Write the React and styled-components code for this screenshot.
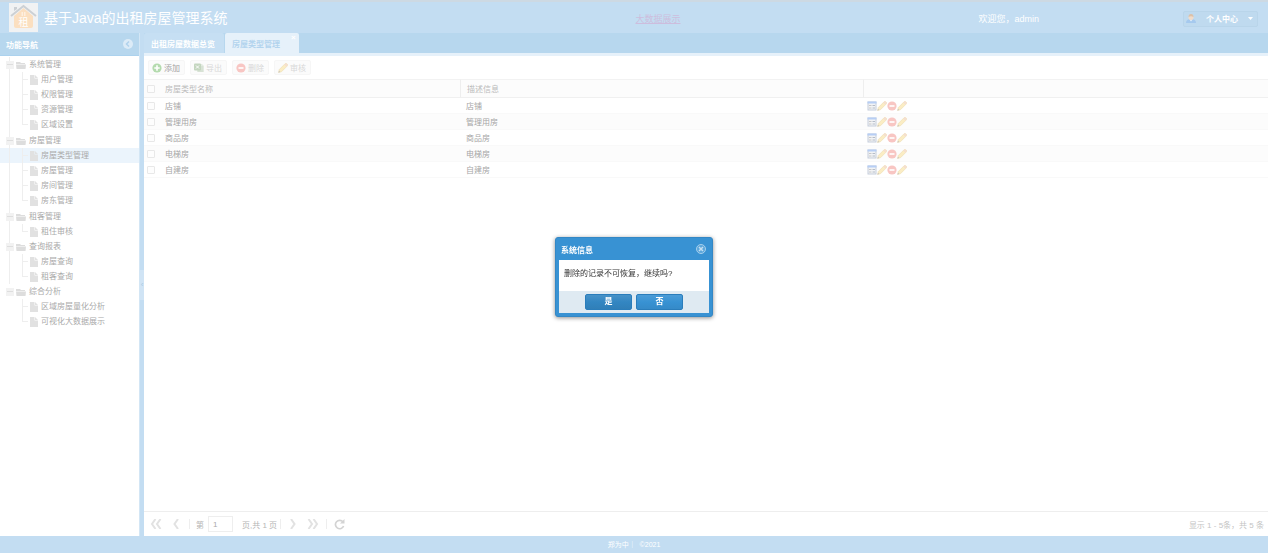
import React, { useState } from 'react'
import styled, { createGlobalStyle } from 'styled-components'

const GlobalStyle = createGlobalStyle`
  * {
    box-sizing: border-box;
  }
  html, body, #root {
    height: 100%;
    margin: 0;
  }
  body, button, input {
    font-family: "Liberation Sans", "Noto Sans CJK SC", sans-serif;
    font-size: 8px;
  }
  button {
    border: 0;
    padding: 0;
    margin: 0;
    background: none;
  }
  svg {
    display: block;
    flex: none;
  }
`

const Page = styled.div`
  display: flex;
  flex-direction: column;
  height: 100vh;
  background: #c3ddf2;
  overflow: hidden;
`

const Header = styled.header`
  display: grid;
  grid-template-columns: 1fr 94px 1fr;
  align-items: center;
  height: 33px;
  flex: none;
  padding: 0 10px 0 9px;
  border-top: 2px solid #cdd9e3;
`

const Brand = styled.div`
  display: flex;
  align-items: center;
  gap: 6px;
`

const Title = styled.h1`
  margin: 0;
  font-size: 14px;
  line-height: 20px;
  font-weight: 400;
  color: #fff;
`

const ScreenLink = styled.a`
  padding-top: 1px;
  font-size: 9px;
  text-align: right;
  color: #cdbddd;
`

const Account = styled.div`
  display: flex;
  align-items: center;
  justify-content: space-between;
  padding: 2px 0 0 298px;
`

const Welcome = styled.span`
  font-size: 9px;
  color: #fff;
  white-space: nowrap;
`

const AccountButton = styled.button`
  display: flex;
  align-items: center;
  justify-content: space-between;
  width: 75px;
  height: 16px;
  padding: 0 4px 0 2px;
  border: 1px solid #b9d5ea;
  border-radius: 2px;
  background: #bfdaef;
  color: #fff;
  font-weight: 700;
`

const Body = styled.div`
  display: flex;
  flex: 1;
  min-height: 0;
`

const Sidebar = styled.nav`
  display: flex;
  flex-direction: column;
  width: 139px;
  flex: none;
  background: #fff;
`

const SidebarHeader = styled.div`
  display: flex;
  align-items: center;
  justify-content: space-between;
  height: 23px;
  padding: 0 6px;
  border-bottom: 1px solid #acd2ee;
  background: #b7d7ee;
  color: #fff;
  font-weight: 700;
`

const Tree = styled.ul`
  margin: 0;
  padding: 1px 0 0;
  list-style: none;
`

const Group = styled.li`
  background: linear-gradient(#eee, #eee) 9px 0 / 1px 100% no-repeat;

  &:nth-child(-n + 2) {
    padding-bottom: 1px;
  }
  &:last-child {
    background: none;
  }
`

const GroupRow = styled.div`
  display: flex;
  align-items: center;
  height: 15px;
  padding-left: 6px;
  color: #aaa;
`

const Toggle = styled.button`
  width: 8px;
  height: 8px;
  margin-right: 2px;
  background: #f2f2f2;

  &::before {
    content: '';
    display: block;
    height: 1px;
    margin: 0 1px;
    background: #dedede;
  }
`

const Label = styled.span`
  margin-left: 3px;
  line-height: 15px;
`

const Leaves = styled.ul`
  margin: 0;
  padding: 0;
  list-style: none;
`

const Leaf = styled.li`
  display: flex;
  align-items: center;
  height: 15px;
  padding-left: 30px;
  color: #aaa;
  background:
    linear-gradient(#eee, #eee) 9px 0 / ${props => (props.$inLastGroup ? 0 : 1)}px 100% no-repeat,
    linear-gradient(#eee, #eee) 22px 0 / 1px ${props => (props.$last ? 50 : 100)}% no-repeat,
    linear-gradient(#eee, #eee) 22px 7px / 6px 1px no-repeat,
    ${props => (props.$active ? '#ebf4fc' : 'transparent')};
`

const Splitter = styled.div`
  display: flex;
  align-items: center;
  width: 5px;
  flex: none;
  border-left: 1px solid #d3e6f5;
`

const SplitterHandle = styled.button`
  width: 4px;
  height: 30px;
  background: #d0e4f5;
  color: #a9c9e2;
`

const Main = styled.main`
  display: flex;
  flex-direction: column;
  flex: 1;
  min-width: 0;
  background: #fff;
`

const TabBar = styled.div`
  display: flex;
  gap: 1px;
  height: 23px;
  flex: none;
  background: #b7d7ee;
  border-bottom: 3px solid #e6f1fa;
`

const Tab = styled.button`
  display: flex;
  align-items: center;
  height: 20px;
  padding: 0 9px 0 7px;
  border-radius: 2px 2px 0 0;
  font-weight: 700;
  color: ${props => (props.$active ? '#b3d4ee' : '#fff')};
  background: ${props => (props.$active ? '#e6f1fa' : '#c6dff3')};
`

const TabClose = styled.span`
  align-self: flex-start;
  margin: 1px -6px 0 11px;
  line-height: 8px;
  color: #fff;
`

const Toolbar = styled.div`
  display: flex;
  align-items: center;
  gap: 5px;
  height: 23px;
  flex: none;
  padding-left: 4px;
`

const ToolButton = styled.button`
  display: flex;
  align-items: center;
  gap: 2px;
  height: 15px;
  padding: 0 4px 0 3px;
  border: 1px solid #f6f6f6;
  border-radius: 2px;
  background: #fbfbfb;
  color: ${props => (props.disabled ? '#d8d8d8' : '#a3a3a3')};
`

const Table = styled.table`
  width: 100%;
  table-layout: fixed;
  border-collapse: separate;
  border-spacing: 0;

  th, td {
    padding: 0 0 0 6px;
    text-align: left;
    font-weight: 400;
    overflow: hidden;
    white-space: nowrap;
  }
  th {
    height: 19px;
    color: #bbb;
    background: #fcfcfc;
    border-top: 1px solid #f2f2f2;
    border-bottom: 1px solid #f0f0f0;
  }
  th:nth-child(n + 3) {
    border-left: 1px solid #eee;
  }
  td {
    height: 16px;
    color: #a6a6a6;
    border-bottom: 1px solid #f9f9f9;
  }
  tr > :first-child {
    padding-left: 3px;
  }
  tr > :nth-child(2), td:last-child {
    padding-left: 4px;
  }
  tbody tr:nth-child(even) {
    background: #fcfcfc;
  }
`

const Checkbox = styled.input.attrs({ type: 'checkbox' })`
  appearance: none;
  display: block;
  width: 8px;
  height: 8px;
  margin: 0;
  border: 1px solid #e8e8e8;
  border-radius: 1px;
  background: #fdfdfd;
`

const Actions = styled.div`
  display: flex;
  align-items: center;
`

const Pager = styled.div`
  display: flex;
  align-items: center;
  height: 25px;
  flex: none;
  margin-top: auto;
  padding: 0 4px 0 2px;
  border-top: 1px solid #eee;
  color: #b5b5b5;
`

const PagerButton = styled.button`
  display: flex;
  justify-content: center;
  width: 20px;
  color: #e2e2e2;
`

const Separator = styled.span`
  width: 1px;
  height: 10px;
  margin: 0 2px 0 3px;
  background: #eee;
`

const PageField = styled.label`
  display: flex;
  align-items: center;
  gap: 4px;
  padding-left: 4px;
`

const PageInput = styled.input`
  width: 25px;
  height: 16px;
  padding: 0 4px;
  border: 1px solid #eee;
  background: #fff;
  color: #aaa;
`

const PageTotal = styled.span`
  padding-left: 9px;
`

const Summary = styled.span`
  margin-left: auto;
  color: #c4c4c4;
`

const Footer = styled.footer`
  height: 17px;
  flex: none;
  font-size: 7px;
  line-height: 17px;
  text-align: center;
  color: #fff;
  white-space: pre;
`

const Mask = styled.div`
  position: fixed;
  inset: 0;
  display: flex;
  align-items: center;
  justify-content: center;
`

const Dialog = styled.section`
  width: 158px;
  margin-top: 1px;
  padding: 0 3px 3px;
  border: 1px solid #3387c5;
  border-radius: 3px;
  background: #3892d3;
  box-shadow: 0 1px 4px rgba(0, 0, 0, 0.45);
`

const DialogHeader = styled.div`
  display: flex;
  align-items: center;
  justify-content: space-between;
  height: 22px;
  padding: 0 3px 0 2px;
  color: #fff;
`

const DialogTitle = styled.h2`
  margin: 0;
  font-size: 8px;
`

const Message = styled.p`
  margin: 0;
  padding: 8px 5px 11px;
  line-height: 12px;
  color: #333;
  background: #fff;
`

const DialogFooter = styled.div`
  display: flex;
  justify-content: center;
  gap: 4px;
  padding: 3px 0;
  background: #dfeaf2;
`

const DialogButton = styled.button`
  width: 47px;
  height: 16px;
  border: 1px solid #2a7dbb;
  border-radius: 2px;
  color: #fff;
  font-weight: 700;
  line-height: 12px;
  background: ${props =>
    props.$focused
      ? 'linear-gradient(#4792c8, #3386c2 50%, #307fb8)'
      : 'linear-gradient(#4b9cd7, #3892d3 50%, #358ac8)'};
`

const groups = [
  { name: '系统管理', items: ['用户管理', '权限管理', '资源管理', '区域设置'] },
  { name: '房屋管理', items: ['房屋类型管理', '房屋管理', '房间管理', '房东管理'] },
  { name: '租客管理', items: ['租住审核'] },
  { name: '查询报表', items: ['房屋查询', '租客查询'] },
  { name: '综合分析', items: ['区域房屋量化分析', '可视化大数据展示'] }
]

const houseTypes = ['店铺', '管理用房', '商品房', '电梯房', '自建房']

const LogoIcon = () => (
  <svg width='29' height='29' viewBox='0 0 29 29'>
    <rect width='29' height='29' fill='#f1f2f3' />
    <path d='M5 13 14.500 5 24 13V23Q24 25 22 25H7Q5 25 5 23Z' fill='#fbdfc0' />
    <path d='M2 13 14.500 3 27 13' fill='none' stroke='#ccd0d4' strokeWidth='2' />
    <path d='M5 8V4H8V6' fill='#ccd0d4' />
    <path d='M12 9h5v4h-5zM14.500 9v4M12 11h5' fill='#fff' stroke='#fbdfc0' strokeWidth='1' />
    <text x='14.500' y='23' fontSize='10' textAnchor='middle' fill='#fff'>租</text>
  </svg>
)

const UserIcon = () => (
  <svg width='10' height='10' viewBox='0 0 10 10'>
    <path d='M0 9Q0 5 5 5Q10 5 10 9Z' fill='#a5c9ee' />
    <path d='M3.500 5.500 5 7.500 6.500 5.500Z' fill='#e8f1fa' />
    <circle cx='5' cy='3.500' r='2.500' fill='#f0dccb' />
    <path d='M2.500 3Q2.500 0 5 0Q7.500 0 7.500 3Q5 1.500 2.500 3Z' fill='#dcc1a8' />
  </svg>
)

const CaretIcon = () => (
  <svg width='5' height='3' viewBox='0 0 5 3'>
    <path d='M0 0H5L2.500 3Z' fill='#fff' />
  </svg>
)

const CollapseIcon = () => (
  <svg width='10' height='10' viewBox='0 0 10 10'>
    <circle cx='5' cy='5' r='5' fill='#dcebf7' />
    <path d='M6 2.500 3.500 5 6 7.500' fill='none' stroke='#b0d2ec' strokeWidth='1.500' />
  </svg>
)

const FolderIcon = () => (
  <svg width='10' height='8' viewBox='0 0 10 8'>
    <path d='M0 1H4L5 2H9V3H0Z' fill='#ddd' />
    <path d='M0 3.500H10L9.500 8H.5Z' fill='#ddd' />
  </svg>
)

const FileIcon = () => (
  <svg width='8' height='10' viewBox='0 0 8 10'>
    <path d='M0 0H4.500V3.500H8V10H0Z' fill='#e1e1e1' />
    <path d='M5 0 8 3H5Z' fill='#e1e1e1' />
  </svg>
)

const AddIcon = () => (
  <svg width='10' height='10' viewBox='0 0 10 10'>
    <circle cx='5' cy='5' r='4.600' fill='#b4dbae' />
    <path d='M5 2.300V7.700M2.300 5H7.700' stroke='#fff' strokeWidth='1.600' />
  </svg>
)

const ExportIcon = () => (
  <svg width='10' height='10' viewBox='0 0 10 10'>
    <path d='M3 1H8L10 3V9H3Z' fill='#e3ebe1' />
    <path d='M6 4H9M6 6H9M4 8H9' stroke='#cddaca' />
    <rect y='.5' width='7' height='7' rx='1' fill='#c4d6bf' />
    <path d='M2 2.500 5 5.500M5 2.500 2 5.500' stroke='#fff' />
  </svg>
)

const DeleteIcon = () => (
  <svg width='10' height='10' viewBox='0 0 10 10'>
    <circle cx='5' cy='5' r='4.600' fill='#f8c6c3' />
    <path d='M2.500 5H7.500' stroke='#fff' strokeWidth='1.600' />
  </svg>
)

const PencilIcon = () => (
  <svg width='10' height='10' viewBox='0 0 10 10'>
    <path d='M.5 9.500 1.300 6.500 7 .8Q8.200 0 9.200 1Q10 2 9.200 3L3.500 8.700Z' fill='#fbedc4' stroke='#eddcb4' strokeWidth='.6' />
    <path d='M7 .8Q8.200 0 9.200 1Q10 2 9.200 3L8.300 3.800 6.200 1.600Z' fill='#f5dfd0' />
    <path d='M.5 9.500 1 7.700 2.300 9Z' fill='#c4c4c4' />
  </svg>
)

const FormIcon = () => (
  <svg width='10' height='10' viewBox='0 0 10 10'>
    <rect x='1' y='1' width='8' height='8' fill='#f2f3f5' stroke='#c6cedb' />
    <path d='M.5 1.500H9.500' stroke='#b7cef5' strokeWidth='2' />
    <path d='M2 4.500H4.500M2 7H4.500' stroke='#c8c8c8' />
    <path d='M5.500 4.500H8M5.500 7H8' stroke='#b5bdc9' />
  </svg>
)

const Chevrons = ({ double, right }) => (
  <svg width='12' height='10' viewBox='0 0 12 10' fill='none' stroke='currentColor' strokeWidth='2'>
    <g transform={right ? 'matrix(-1 0 0 1 12 0)' : undefined}>
      <path d={double ? 'M5.500 0 2 5 5.500 10M10.500 0 7 5 10.500 10' : 'M8 0 4.500 5 8 10'} />
    </g>
  </svg>
)

const RefreshIcon = () => (
  <svg width='11' height='11' viewBox='0 0 11 11'>
    <path d='M9 3A4.200 4.200 0 1 0 9.600 7' fill='none' stroke='#d3d3d3' strokeWidth='1.700' />
    <path d='M10.500 0V4.500H6Z' fill='#d3d3d3' />
  </svg>
)

const CloseIcon = () => (
  <svg width='10' height='10' viewBox='0 0 10 10'>
    <circle cx='5' cy='5' r='4.500' fill='#5ba6db' stroke='#a6cfec' />
    <path d='M3 3 7 7M7 3 3 7' stroke='#c3dff2' strokeWidth='1.500' />
  </svg>
)

const NavTree = () => (
  <Tree>
    {groups.map((group, g) => (
      <Group key={group.name}>
        <GroupRow>
          <Toggle aria-label='收起' />
          <FolderIcon />
          <Label>{group.name}</Label>
        </GroupRow>
        <Leaves>
          {group.items.map((item, i) => (
            <Leaf
              key={item}
              $active={item === '房屋类型管理'}
              $last={i === group.items.length - 1}
              $inLastGroup={g === groups.length - 1}
            >
              <FileIcon />
              <Label>{item}</Label>
            </Leaf>
          ))}
        </Leaves>
      </Group>
    ))}
  </Tree>
)

const HouseTypeTable = () => (
  <Table>
    <colgroup>
      <col width='17' />
      <col width='299' />
      <col width='403' />
      <col />
    </colgroup>
    <thead>
      <tr>
        <th><Checkbox aria-label='全选' /></th>
        <th>房屋类型名称</th>
        <th>描述信息</th>
        <th aria-label='操作' />
      </tr>
    </thead>
    <tbody>
      {houseTypes.map(name => (
        <tr key={name}>
          <td><Checkbox aria-label={name} /></td>
          <td>{name}</td>
          <td>{name}</td>
          <td>
            <Actions>
              <button aria-label='查看'><FormIcon /></button>
              <button aria-label='编辑'><PencilIcon /></button>
              <button aria-label='删除'><DeleteIcon /></button>
              <button aria-label='审核'><PencilIcon /></button>
            </Actions>
          </td>
        </tr>
      ))}
    </tbody>
  </Table>
)

const ConfirmDialog = ({ onClose }) => (
  <Mask>
    <Dialog role='dialog' aria-labelledby='confirm-title'>
      <DialogHeader>
        <DialogTitle id='confirm-title'>系统信息</DialogTitle>
        <button aria-label='关闭' onClick={onClose}><CloseIcon /></button>
      </DialogHeader>
      <Message>删除的记录不可恢复，继续吗?</Message>
      <DialogFooter>
        <DialogButton $focused onClick={onClose}>是</DialogButton>
        <DialogButton onClick={onClose}>否</DialogButton>
      </DialogFooter>
    </Dialog>
  </Mask>
)

const App = () => {
  const [isConfirming, setIsConfirming] = useState(true)
  const [page, setPage] = useState('1')

  return (
    <Page lang='zh-CN'>
      <GlobalStyle />
      <Header>
        <Brand>
          <LogoIcon />
          <Title>基于Java的出租房屋管理系统</Title>
        </Brand>
        <ScreenLink href='#screen'>大数据展示</ScreenLink>
        <Account>
          <Welcome>欢迎您，admin</Welcome>
          <AccountButton>
            <UserIcon />
            个人中心
            <CaretIcon />
          </AccountButton>
        </Account>
      </Header>
      <Body>
        <Sidebar>
          <SidebarHeader>
            功能导航
            <button aria-label='收起导航'><CollapseIcon /></button>
          </SidebarHeader>
          <NavTree />
        </Sidebar>
        <Splitter>
          <SplitterHandle aria-label='收起'>‹</SplitterHandle>
        </Splitter>
        <Main>
          <TabBar>
            <Tab>出租房屋数据总览</Tab>
            <Tab $active>
              房屋类型管理
              <TabClose>×</TabClose>
            </Tab>
          </TabBar>
          <Toolbar>
            <ToolButton><AddIcon />添加</ToolButton>
            <ToolButton disabled><ExportIcon />导出</ToolButton>
            <ToolButton disabled><DeleteIcon />删除</ToolButton>
            <ToolButton disabled><PencilIcon />审核</ToolButton>
          </Toolbar>
          <HouseTypeTable />
          <Pager>
            <PagerButton aria-label='首页'><Chevrons double /></PagerButton>
            <PagerButton aria-label='上一页'><Chevrons /></PagerButton>
            <Separator />
            <PageField>
              第
              <PageInput value={page} onChange={e => setPage(e.target.value)} />
            </PageField>
            <PageTotal>页,共 1 页</PageTotal>
            <Separator />
            <PagerButton aria-label='下一页'><Chevrons right /></PagerButton>
            <PagerButton aria-label='末页'><Chevrons double right /></PagerButton>
            <Separator />
            <PagerButton aria-label='刷新'><RefreshIcon /></PagerButton>
            <Summary>显示 1 - 5条，共 5 条</Summary>
          </Pager>
        </Main>
      </Body>
      <Footer>郑为中｜  ©2021</Footer>
      {isConfirming && <ConfirmDialog onClose={() => setIsConfirming(false)} />}
    </Page>
  )
}

export default App
